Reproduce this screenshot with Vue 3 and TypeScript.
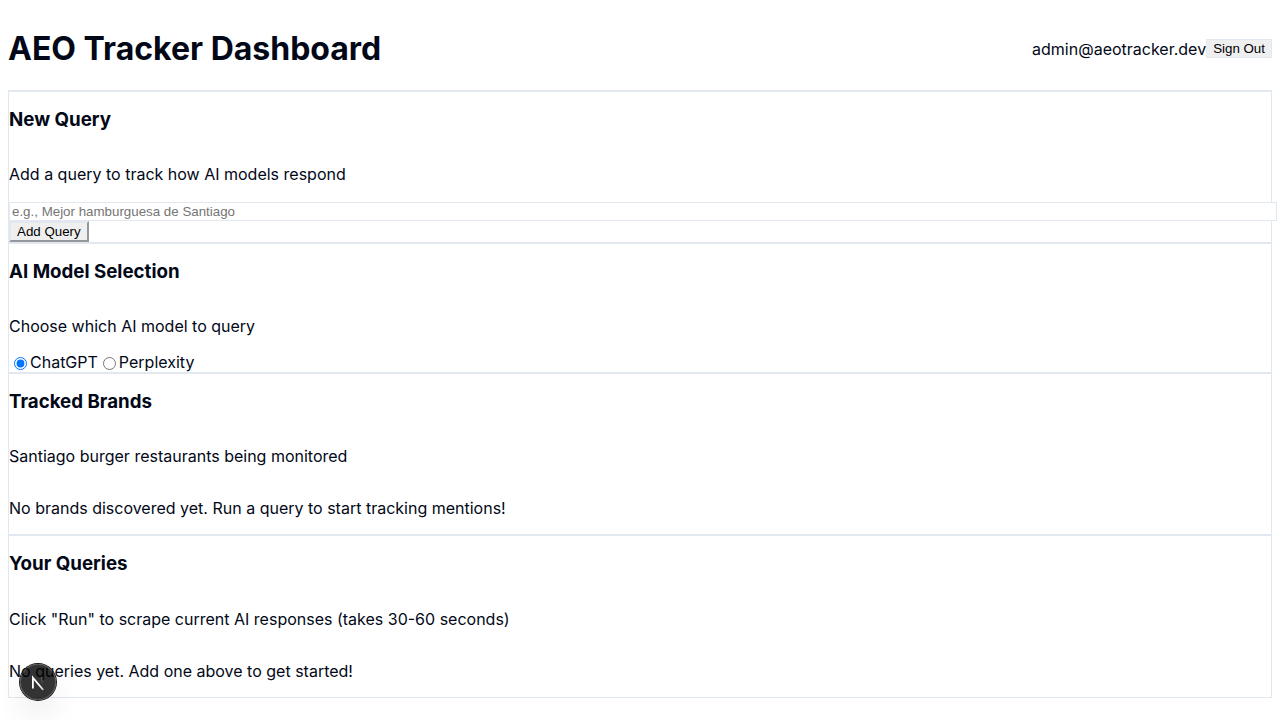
<script setup lang="ts">
import { ref } from 'vue'

interface Model {
  id: string
  label: string
}

const email = 'admin@aeotracker.dev'
const models: Model[] = [
  { id: 'chatgpt', label: 'ChatGPT' },
  { id: 'perplexity', label: 'Perplexity' },
]

const query = ref('')
const selectedModel = ref('chatgpt')
</script>

<template>
  <main class="dashboard">
    <header class="topbar">
      <h1>AEO Tracker Dashboard</h1>
      <div class="account">
        <span>{{ email }}</span>
        <button type="button" class="sign-out">Sign Out</button>
      </div>
    </header>

    <section class="card">
      <div class="card-header">
        <h3>New Query</h3>
        <p>Add a query to track how AI models respond</p>
      </div>
      <form class="query-form" @submit.prevent>
        <input
          v-model="query"
          class="query-input"
          type="text"
          aria-label="New query"
          placeholder="e.g., Mejor hamburguesa de Santiago"
        />
        <button type="submit" class="add-button">Add Query</button>
      </form>
    </section>

    <section class="card">
      <div class="card-header">
        <h3>AI Model Selection</h3>
        <p>Choose which AI model to query</p>
      </div>
      <div class="models">
        <label v-for="model in models" :key="model.id" :for="model.id">
          <input :id="model.id" v-model="selectedModel" type="radio" name="model" :value="model.id" />{{ model.label }}
        </label>
      </div>
    </section>

    <section class="card">
      <div class="card-header">
        <h3>Tracked Brands</h3>
        <p>Santiago burger restaurants being monitored</p>
      </div>
      <div class="card-content">
        <p>No brands discovered yet. Run a query to start tracking mentions!</p>
      </div>
    </section>

    <section class="card">
      <div class="card-header">
        <h3>Your Queries</h3>
        <p>Click "Run" to scrape current AI responses (takes 30-60 seconds)</p>
      </div>
      <div class="card-content">
        <p>No queries yet. Add one above to get started!</p>
      </div>
    </section>

    <button type="button" class="dev-badge" aria-label="Open developer tools">
      <svg width="40" height="40" viewBox="0 0 40 40" fill="none">
        <defs>
          <linearGradient id="diagonal" x1="21" y1="22" x2="26" y2="29" gradientUnits="userSpaceOnUse">
            <stop stop-color="#fff" />
            <stop offset="0.7" stop-color="#fff" stop-opacity="0.8" />
            <stop offset="1" stop-color="#fff" stop-opacity="0.2" />
          </linearGradient>
          <linearGradient id="upright" x1="23" y1="14" x2="23" y2="23" gradientUnits="userSpaceOnUse">
            <stop stop-color="#fff" stop-opacity="0.25" />
            <stop offset="1" stop-color="#fff" stop-opacity="0" />
          </linearGradient>
        </defs>
        <path d="M25.3 28 14.9 15.6v11" stroke="url(#diagonal)" stroke-width="1.8" />
        <path d="M23.8 15v9" stroke="url(#upright)" stroke-width="1.6" />
      </svg>
    </button>
  </main>
</template>

<style>
body {
  margin: 0;
  background: #fff;
}
</style>

<style scoped>
.dashboard {
  padding: 8px;
  color: #020817;
  font-family: Inter, "Liberation Sans", sans-serif;
  font-size: 16px;
}

.topbar {
  display: flex;
  align-items: center;
  justify-content: space-between;
  padding-bottom: 1px;
  border-bottom: 1px solid #e2e8f0;
}

.topbar h1 {
  margin: 21px 0;
  font-size: 32px;
  font-weight: 700;
}

.account {
  display: flex;
  align-items: center;
}

.sign-out {
  border: 1px solid #e2e8f0;
  background: #efefef;
  color: #000;
}

.card {
  border: 1px solid #e2e8f0;
}

.card-header {
  display: flex;
  flex-direction: column;
}

.card-header h3 {
  line-height: 1;
  font-weight: 700;
}

.card-content {
  display: flow-root;
}

.query-form {
  display: flex;
  flex-direction: column;
  align-items: flex-start;
  padding-top: 2px;
}

.query-input {
  box-sizing: content-box;
  width: 100%;
  height: 15px;
  padding: 1px 2px;
  border: 1px solid #e2e8f0;
  background: #fff;
}

.add-button {
  border: 2px outset #e2e8f0;
  background: #efefef;
  color: #000;
}

.models {
  display: flex;
  line-height: 20px;
}

.models label {
  display: flex;
  align-items: flex-end;
}

.models input {
  margin: 3px 3px 2px 5px;
}

.dev-badge {
  position: fixed;
  bottom: 20px;
  left: 20px;
  display: flex;
  align-items: center;
  justify-content: center;
  width: 36px;
  height: 36px;
  padding: 0;
  border: 0;
  border-radius: 50%;
  background: rgba(0, 0, 0, 0.8);
  box-shadow:
    0 0 0 1px #171717,
    inset 0 0 0 1px rgba(255, 255, 255, 0.14),
    0 16px 32px -8px rgba(0, 0, 0, 0.24);
}

.dev-badge svg {
  flex: none;
}
</style>
